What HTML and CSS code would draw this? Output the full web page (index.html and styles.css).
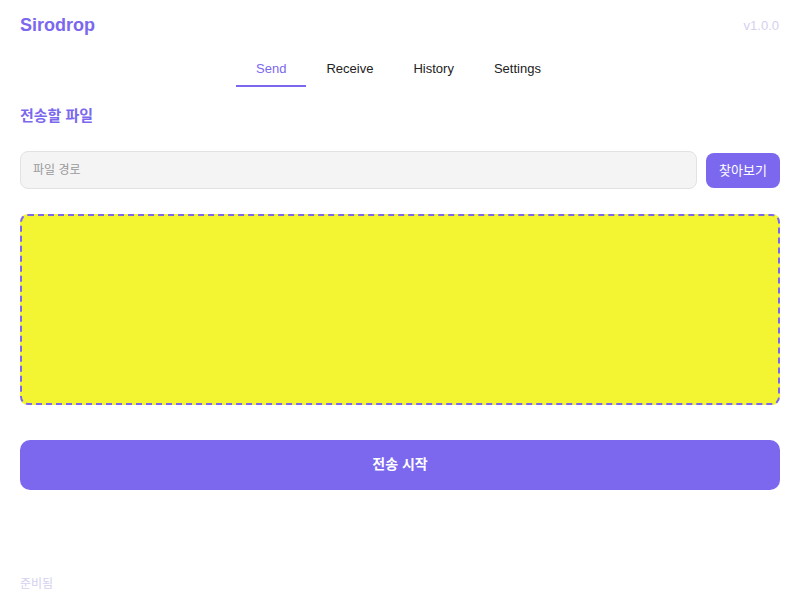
FILE: index.html
```html
<!DOCTYPE html>
<html lang="ko">
<head>
<meta charset="utf-8">
<title>Sirodrop</title>
<link rel="stylesheet" href="styles.css">
</head>
<body>
<div class="app">
  <header class="header">
    <div class="logo">Sirodrop</div>
    <div class="version">v1.0.0</div>
  </header>
  <nav class="tabs">
    <div class="tab active">Send</div>
    <div class="tab">Receive</div>
    <div class="tab">History</div>
    <div class="tab">Settings</div>
  </nav>
  <h2 class="section-title">전송할 파일</h2>
  <div class="file-row">
    <input class="path-input" type="text" placeholder="파일 경로">
    <button class="browse-btn">찾아보기</button>
  </div>
  <div class="drop-zone"></div>
  <button class="start-btn">전송 시작</button>
  <footer class="status">준비됨</footer>
</div>
</body>
</html>
```

FILE: styles.css
```css
* { box-sizing: border-box; }
html, body { margin: 0; padding: 0; background: #ffffff; }
body {
  font-family: "Liberation Sans", "Noto Sans CJK KR", sans-serif;
  color: #222;
}
.app {
  display: flex;
  flex-direction: column;
  min-height: 100vh;
  padding: 0 20px;
}
.header {
  display: flex;
  justify-content: space-between;
  align-items: center;
  margin-top: 14px;
  height: 22px;
}
.logo {
  font-size: 18px;
  font-weight: bold;
  color: #7b68ee;
  line-height: 22px;
}
.version {
  font-size: 13px;
  padding-right: 1px;
  color: #d4d0ef;
}
.tabs {
  display: flex;
  justify-content: center;
  margin-top: 16px;
  padding-right: 3px;
}
.tab {
  font-size: 13px;
  line-height: 16px;
  padding: 9px 20px 8px;
  border-bottom: 2px solid transparent;
  color: #222;
}
.tab.active {
  color: #7b68ee;
  border-bottom-color: #7b68ee;
}
.section-title {
  margin: 19px 0 0;
  font-size: 15px;
  line-height: 20px;
  font-weight: bold;
  color: #7b68ee;
}
.file-row {
  display: flex;
  align-items: center;
  gap: 9px;
  margin-top: 25px;
}
.path-input {
  flex: 1;
  height: 38px;
  border: 1px solid #e2e2e2;
  border-radius: 8px;
  background: #f4f4f4;
  padding: 0 12px;
  font-family: inherit;
  font-size: 12px;
  outline: none;
}
.path-input::placeholder { color: #999; }
.browse-btn {
  width: 74px;
  height: 35px;
  border: none;
  border-radius: 8px;
  background: #7b68ee;
  color: #fff;
  font-family: inherit;
  font-size: 13px;
  padding: 0 0 2px;
}
.drop-zone {
  margin-top: 25px;
  height: 191px;
  border: 2px dashed #7b68ee;
  border-radius: 8px;
  background: #f3f533;
}
.start-btn {
  margin-top: 35px;
  height: 50px;
  border: none;
  border-radius: 10px;
  background: #7b68ee;
  color: #fff;
  font-family: inherit;
  font-size: 14px;
  font-weight: bold;
  padding: 0 0 4px;
}
.status {
  margin-top: auto;
  padding-bottom: 8px;
  font-size: 12px;
  line-height: 16px;
  color: #d4d0ef;
}
```
